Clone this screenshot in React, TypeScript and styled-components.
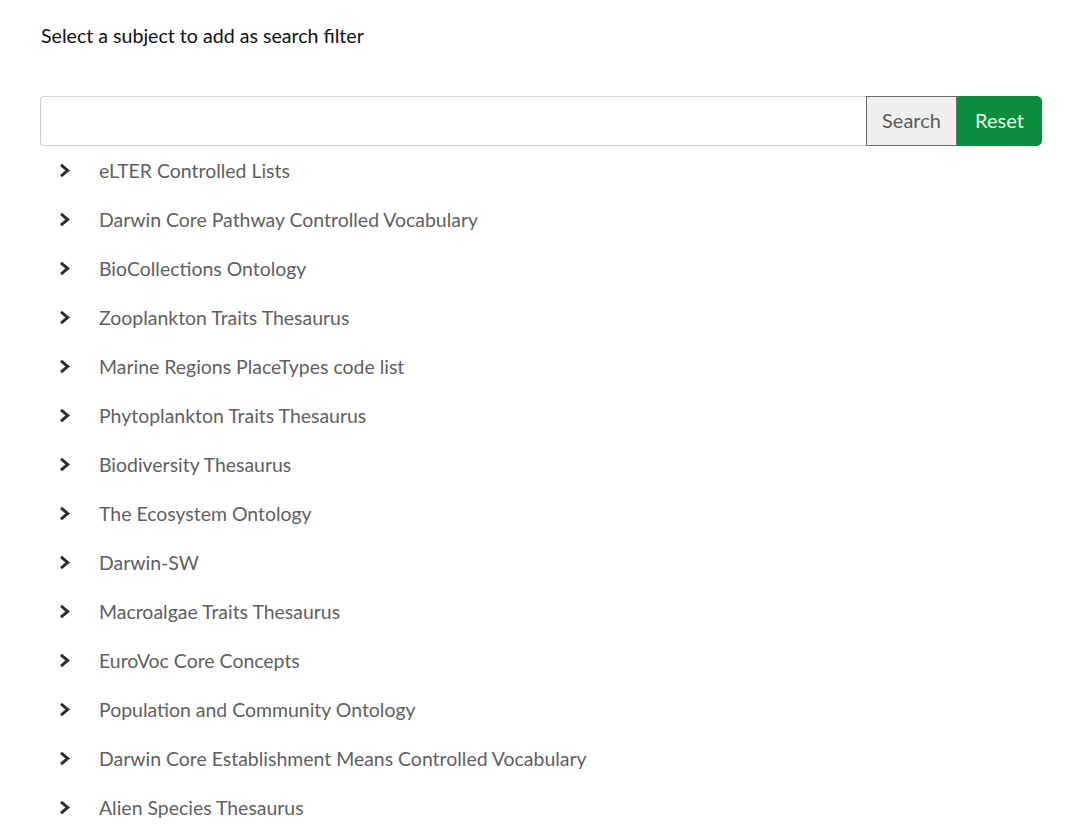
import React from "react";
import styled, { createGlobalStyle } from "styled-components";

const Global = createGlobalStyle`
  html, body { margin: 0; padding: 0; background: #fff; }
  body { font-family: Lato, "Liberation Sans", sans-serif; }
`;

const Page = styled.div`
  padding: 26px 38px 0 40px;
`;

const Title = styled.div`
  font-size: 19.6px;
  line-height: 20px;
  color: #111;
  margin-left: 1px;
  margin-bottom: 50px;
`;

const SearchBar = styled.div`
  display: flex;
  height: 50px;
`;

const Input = styled.input`
  flex: 1;
  min-width: 0;
  box-sizing: border-box;
  height: 100%;
  border: 1px solid #cfcfcf;
  border-right: none;
  border-radius: 4px 0 0 4px;
  padding: 0 12px;
  font-family: inherit;
  font-size: 18px;
  outline: none;
`;

const Button = styled.button<{ $primary?: boolean }>`
  box-sizing: border-box;
  height: 100%;
  width: ${(p) => (p.$primary ? "85px" : "91px")};
  font-family: inherit;
  font-size: 20px;
  padding: 0 0 2px;
  cursor: pointer;
  border: 1px solid ${(p) => (p.$primary ? "#0b8e3b" : "#6f6f6f")};
  background: ${(p) => (p.$primary ? "#0b8e3b" : "#efefef")};
  color: ${(p) => (p.$primary ? "#e9f6ec" : "#5a5a5a")};
  border-radius: ${(p) => (p.$primary ? "0 5px 5px 0" : "0")};
`;

const List = styled.ul`
  list-style: none;
  margin: 0;
  padding: 0;
`;

const Row = styled.li`
  display: flex;
  align-items: center;
  height: 49px;
`;

const Chevron = styled.svg`
  width: 11px;
  height: 15px;
  margin-left: 19px;
  margin-right: 29px;
  flex: none;
`;

const Label = styled.span`
  display: block;
  font-size: 19.45px;
  line-height: 22px;
  padding-top: 1px;
  color: #5f5f5f;
`;

const items = [
  "eLTER Controlled Lists",
  "Darwin Core Pathway Controlled Vocabulary",
  "BioCollections Ontology",
  "Zooplankton Traits Thesaurus",
  "Marine Regions PlaceTypes code list",
  "Phytoplankton Traits Thesaurus",
  "Biodiversity Thesaurus",
  "The Ecosystem Ontology",
  "Darwin-SW",
  "Macroalgae Traits Thesaurus",
  "EuroVoc Core Concepts",
  "Population and Community Ontology",
  "Darwin Core Establishment Means Controlled Vocabulary",
  "Alien Species Thesaurus",
];

export default function App() {
  return (
    <>
      <Global />
      <Page>
        <Title>Select a subject to add as search filter</Title>
        <SearchBar>
          <Input type="text" />
          <Button>Search</Button>
          <Button $primary>Reset</Button>
        </SearchBar>
        <List>
          {items.map((t) => (
            <Row key={t}>
              <Chevron viewBox="0 0 11 15">
                <polyline
                  points="2,1.8 8.8,7.5 2,13.2"
                  fill="none"
                  stroke="#2e2e2e"
                  strokeWidth="3"
                  strokeLinejoin="miter"
                />
              </Chevron>
              <Label>{t}</Label>
            </Row>
          ))}
        </List>
      </Page>
    </>
  );
}
